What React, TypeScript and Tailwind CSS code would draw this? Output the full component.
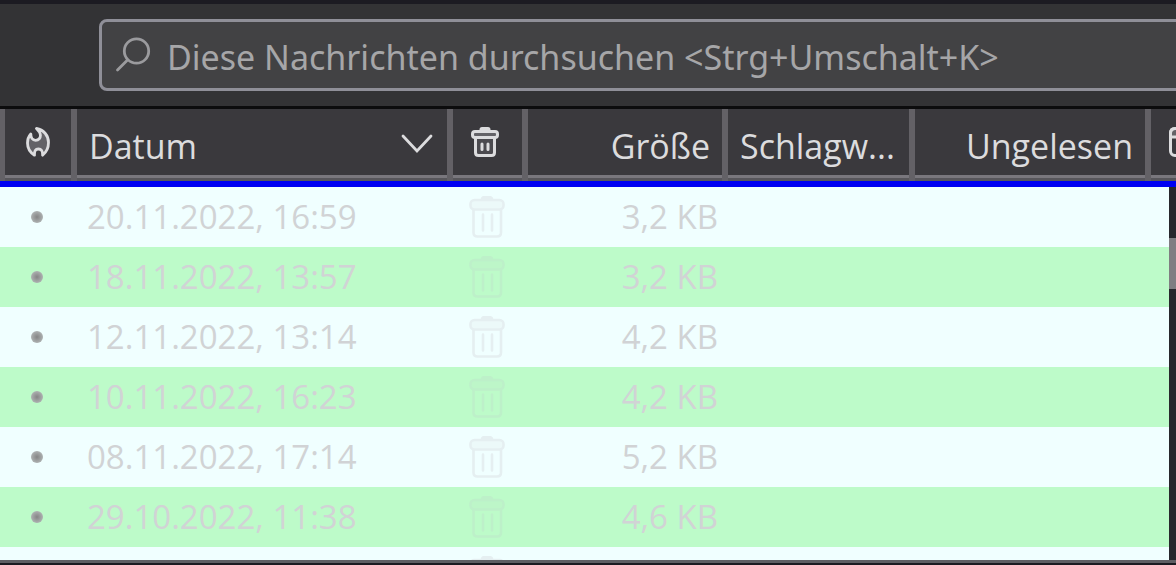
import type { ReactNode } from 'react'
import { clsx } from 'clsx'

type Message = { date: string; size: string }

const MESSAGES: Message[] = [
  { date: '20.11.2022, 16:59', size: '3,2 KB' },
  { date: '18.11.2022, 13:57', size: '3,2 KB' },
  { date: '12.11.2022, 13:14', size: '4,2 KB' },
  { date: '10.11.2022, 16:23', size: '4,2 KB' },
  { date: '08.11.2022, 17:14', size: '5,2 KB' },
  { date: '29.10.2022, 11:38', size: '4,6 KB' },
  { date: '', size: '' },
]

function SearchIcon() {
  return (
    <svg className="w-9 h-9 shrink-0" viewBox="0 0 36 36" fill="none" stroke="currentColor" strokeWidth="2.8" strokeLinecap="round">
      <circle cx="21.5" cy="14" r="12.2" />
      <path d="M12.5 23 2.5 33" />
    </svg>
  )
}

function FlameIcon() {
  return (
    <svg className="w-6 h-[30px]" viewBox="0 0 24 30" fill="#636267" stroke="currentColor" strokeWidth="2.8" strokeLinejoin="round">
      <path d="M10.5 1.5C17.5 2.5 22.5 8.5 22.5 15.5C22.5 21 20.5 25 16.6 28.2C16.8 24 15.3 22 12.4 22C9.5 22 8.2 24 8.5 28.2C4.2 25.5 1.5 21 1.5 16C1.5 12 2.6 9.5 4.8 7C4.8 10.5 6.5 13.3 9.6 13.3C12.8 13.3 14.6 11 14.4 8C14.2 5.2 12.5 3.5 10.5 1.5Z" />
    </svg>
  )
}

function TrashIcon() {
  return (
    <svg className="w-7 h-[30px]" viewBox="0 0 28 30" fill="none" stroke="currentColor" strokeWidth="3" strokeLinejoin="round">
      <path d="M4.5 11V25.5Q4.5 28.5 7.5 28.5H20.5Q23.5 28.5 23.5 25.5V11" fill="#4b4a4f" />
      <rect x="1.5" y="4.5" width="25" height="6" rx="2.5" fill="#636267" />
      <path d="M10 3.5V2.5Q10 1.5 11 1.5H17Q18 1.5 18 2.5V3.5Z" fill="currentColor" />
      <path d="M11 17V22.5M17 17V22.5" strokeLinecap="round" />
    </svg>
  )
}

function RowTrashIcon() {
  return (
    <svg className="w-9 h-[42px]" viewBox="0 0 36 42" fill="none" stroke="currentColor" strokeWidth="2.6" strokeLinejoin="round">
      <path d="M4.5 14V36.5Q4.5 40.5 8.5 40.5H28Q32 40.5 32 36.5V14" />
      <rect x="1.5" y="4" width="33" height="9.5" rx="4" fill="currentColor" fillOpacity="0.4" />
      <path d="M13 3.5Q13 1.2 15.5 1.2H20.5Q23 1.2 23 3.5Z" fill="currentColor" />
      <path d="M14 18.5V34.5M23 18.5V34.5" strokeLinecap="round" />
    </svg>
  )
}

function CalendarIcon() {
  return (
    <svg className="w-[30px] h-[30px] shrink-0" viewBox="0 0 30 30" fill="none" stroke="currentColor" strokeWidth="3">
      <path d="M1.5 10V6Q1.5 1.5 6 1.5H24Q28.5 1.5 28.5 6V10Z" fill="#636267" />
      <rect x="1.5" y="1.5" width="27" height="27" rx="4.5" />
    </svg>
  )
}

type HeaderCellProps = {
  label?: string
  edge?: string
  className?: string
  children?: ReactNode
}

function HeaderCell({ label, edge = 'border-r-6', className, children }: HeaderCellProps) {
  return (
    <th className={clsx('p-0 border-[#636166] font-normal overflow-hidden', edge)}>
      <button
        aria-label={label}
        className={clsx('flex w-full h-[69px] items-center border-b-3 border-[#79777d] bg-[#3a393d] overflow-hidden', className)}
      >
        {children}
      </button>
      <div className="h-[3px] bg-[#57565b]" />
    </th>
  )
}

export default function App() {
  return (
    <div className="flex flex-col h-screen overflow-hidden bg-[#1c1b22] font-['Open_Sans','Noto_Sans',sans-serif] text-[34px] leading-[48px]">
      <div className="mt-1 py-[15px] pl-[99px] bg-[#333335] border-b-3 border-[#0c0c0d]">
        <label className="flex items-center h-[72px] -mr-4 pl-[13px] gap-4 rounded-lg border-3 border-[#8f8f98] bg-[#424244] text-[#9b9b9e]">
          <SearchIcon />
          <input
            type="search"
            aria-label="Nachrichten durchsuchen"
            placeholder="Diese Nachrichten durchsuchen <Strg+Umschalt+K>"
            className="flex-1 min-w-0 h-12 mt-1 bg-transparent outline-none font-['Noto_Sans',sans-serif] placeholder:text-[#a6a6a8]"
          />
        </label>
      </div>

      <div className="relative flex-1 min-h-0 overflow-hidden bg-[#f0ffff]">
        <table className="w-full table-fixed border-separate border-spacing-0">
          <colgroup>
            <col className="w-[77px]" />
            <col />
            <col className="w-[75px]" />
            <col className="w-[200px]" />
            <col className="w-[187px]" />
            <col className="w-[236px]" />
            <col className="w-[25px]" />
          </colgroup>
          <thead className="text-[#dcdcde]">
            <tr>
              <HeaderCell label="Junk-Status" edge="border-l-5 border-r-6" className="justify-center">
                <FlameIcon />
              </HeaderCell>
              <HeaderCell className="justify-between px-3 pt-2">
                Datum
                <svg className="w-9 h-6 -mt-2" viewBox="0 0 36 24" fill="none" stroke="currentColor" strokeWidth="2.8" strokeLinecap="round">
                  <path d="M4 6 18 21 32 6" />
                </svg>
              </HeaderCell>
              <HeaderCell label="Löschen" className="pl-[18px]">
                <TrashIcon />
              </HeaderCell>
              <HeaderCell className="justify-end px-3 pt-2">Größe</HeaderCell>
              <HeaderCell label="Schlagwörter" className="px-3 pt-2">
                Schlagw...
              </HeaderCell>
              <HeaderCell className="justify-end px-3 pt-2">Ungelesen</HeaderCell>
              <HeaderCell label="Spalten auswählen" edge="border-r-0" className="pl-[18px]">
                <CalendarIcon />
              </HeaderCell>
            </tr>
            <tr>
              <td colSpan={7} className="h-[6px] p-0 bg-[#0000f2]" />
            </tr>
          </thead>
          <tbody className="text-[33px] text-[#d1d3d5]">
            {MESSAGES.map((m, i) => (
              <tr key={i} className={clsx('h-[60px]', i % 2 ? 'bg-[#bdfbc9]' : 'bg-[#f0ffff]')}>
                <td className="p-0">
                  <div className="ml-[31px] w-3 h-3 rounded-full bg-radial from-[#858585] to-[#c0c6c6]" />
                </td>
                <td className="p-0 pl-[10px]">{m.date}</td>
                <td className={clsx('p-0 pl-4', i % 2 ? 'text-[#bdf0c9]' : 'text-[#e5eff1]')}>
                  <RowTrashIcon />
                </td>
                <td className="p-0 pr-[10px] text-right">{m.size}</td>
                <td />
                <td />
                <td />
              </tr>
            ))}
          </tbody>
        </table>

        {/* scrollbar, laid over the right edge of the list */}
        <div className="absolute top-[78px] right-0 bottom-0 w-[7px] pt-[51px] bg-[#28282d]">
          <div className="h-[51px] bg-[#807e82]" />
        </div>
      </div>
      <div className="h-[5px] border-t-3 border-[#5f5e64]" />
    </div>
  )
}
